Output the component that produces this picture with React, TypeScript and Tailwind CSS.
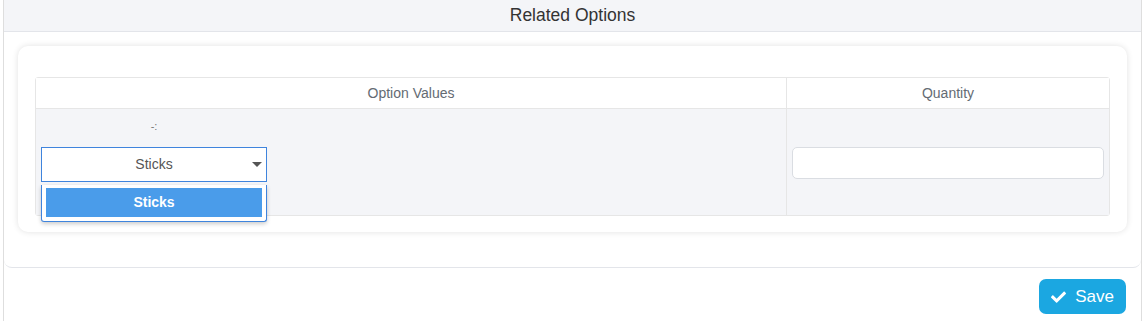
export default function App() {
  return (
    <div className="w-[1145px] h-[321px] bg-white font-['Liberation_Sans',Arial,sans-serif] overflow-hidden">
      <div className="ml-[3px] w-[1139px] h-full border-x border-[#dedede] flex flex-col">
        {/* Header */}
        <div className="h-[32px] shrink-0 bg-[#f4f5f8] border-b border-[#e3e5ea] flex items-center justify-center text-[17.5px] text-[#333]">
          Related Options
        </div>

        {/* Body */}
        <div className="px-[14px] pt-[14px] pb-[35px] border-b border-[#e3e5ea] rounded-b-[8px]">
          <div className="rounded-[10px] bg-white shadow-[0_0_6px_rgba(0,0,0,0.12)] pt-[31px] px-[17px] pb-[16px]">
            <div className="border border-[#e6e6e6] rounded-[3px]">
              <div className="flex h-[31px] bg-white border-b border-[#e6e6e6] text-[14px] text-[#646b73]">
                <div className="w-[751px] flex items-center justify-center border-r border-[#e6e6e6]">Option Values</div>
                <div className="flex-1 flex items-center justify-center">Quantity</div>
              </div>
              <div className="flex h-[106px] bg-[#f4f5f8]">
                <div className="w-[751px] border-r border-[#e6e6e6] pl-[5px] pt-[8px]">
                  <div className="w-[226px] relative">
                    <div className="text-center text-[11px] text-[#777] leading-[18px]">-:</div>
                    <div className="mt-[12px] h-[35px] bg-white border border-[#3f84dd] flex items-center relative">
                      <span className="flex-1 text-center text-[14px] text-[#555]">Sticks</span>
                      <svg className="absolute right-[4px] top-[14px]" width="10" height="6" viewBox="0 0 10 6">
                        <path d="M0 0 L10 0 L5 5 Z" fill="#555" />
                      </svg>
                    </div>
                    <div className="absolute left-0 top-[68px] w-[226px] h-[37px] bg-white border border-[#3f84dd] border-t-0 rounded-b-[3px] shadow-[0_2px_4px_rgba(0,0,0,0.2)] px-[4px] pt-[3px] z-10">
                      <div className="h-[29px] bg-[#4a9cea] flex items-center justify-center text-[14px] font-bold text-white">Sticks</div>
                    </div>
                  </div>
                </div>
                <div className="flex-1 px-[5px] pt-[38px]">
                  <input className="w-full h-[32px] bg-white border border-[#dadde2] rounded-[5px] outline-none" />
                </div>
              </div>
            </div>
          </div>
        </div>

        {/* Footer */}
        <div className="flex justify-end pt-[11px] pr-[15px]">
          <button className="w-[87px] h-[35px] rounded-[7px] bg-[#1ba7e1] text-white text-[17px] flex items-center justify-center gap-[9px]">
            <svg width="15" height="12" viewBox="0 0 512 400" fill="currentColor">
              <path d="M173.9 390.6L7.5 224.2c-10-10-10-26.2 0-36.2l36.2-36.2c10-10 26.2-10 36.2 0L192 263.9 432.1 23.8c10-10 26.2-10 36.2 0l36.2 36.2c10 10 10 26.2 0 36.2L210.1 390.6c-10 10-26.2 10-36.2 0z" />
            </svg>
            Save
          </button>
        </div>
      </div>
    </div>
  );
}
